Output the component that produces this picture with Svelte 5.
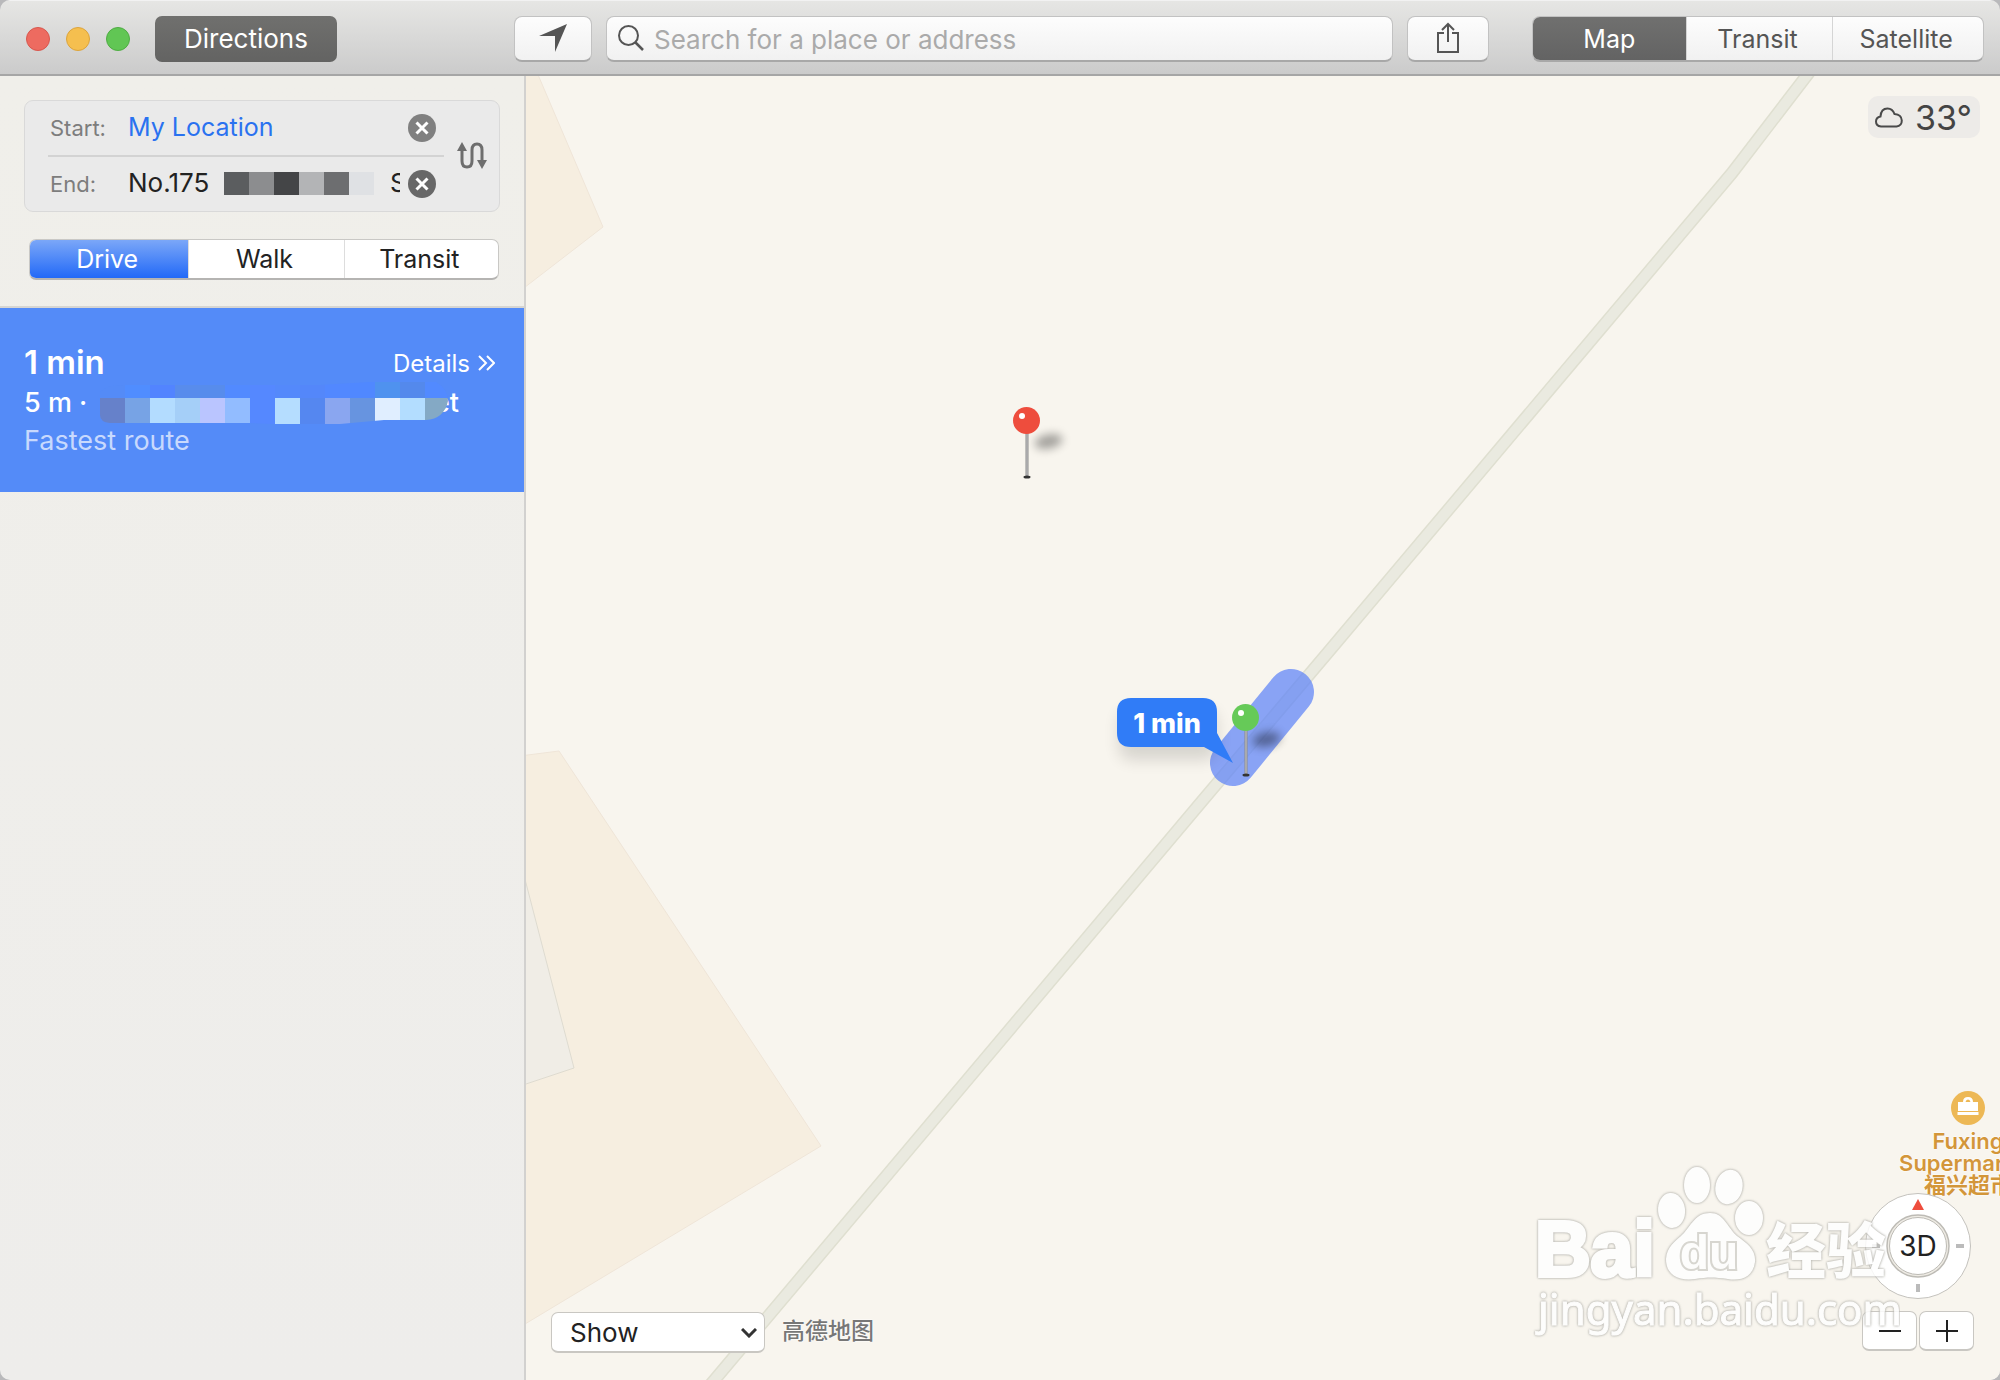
<script>
  let start = $state('My Location');
  let end = $state('No.175');
  let query = $state('');
  let mode = $state('Drive');
  let view = $state('Map');
  const modes = ['Drive', 'Walk', 'Transit'];
  const views = ['Map', 'Transit', 'Satellite'];
  const endBlocks = ['#5b5d5f', '#8c8d8f', '#444547', '#b3b4b6', '#6d6e70', '#dfe1e4'];
  const routeBlocks = ['#6681ca', '#77a3e5', '#b3dcff', '#a5cff8', '#bac5ff', '#92bcff', '#5588ff', '#b5ddff', '#5587f0', '#8aa6f0', '#6794e0', '#e0eeff', '#b3ddff', '#84a9c5'];
  const routeTops = ['#548bf7', '#508dff', '#5284ff', '#588cec', '#578cec', '#528aff', '#5588ff', '#5489fb', '#5487fa', '#5288ff', '#5088ff', '#4f92ef', '#5489ec', '#528aff'];

  function swap() {
    [start, end] = [end, start];
  }
</script>

<div class="window">
  <header class="toolbar">
    <div class="lights">
      <button class="light red" aria-label="Close"></button>
      <button class="light yellow" aria-label="Minimize"></button>
      <button class="light green" aria-label="Zoom"></button>
    </div>
    <button class="directions">Directions</button>
    <button class="tool locate" aria-label="Current location">
      <svg width="28" height="28" viewBox="0 0 28 28"><path d="M28 0 L16 28 L16 12 L0 12 Z" fill="#555" /></svg>
    </button>
    <label class="search">
      <svg width="26" height="26" viewBox="0 0 26 26" fill="none" stroke="#555" stroke-width="2"><circle cx="10.500" cy="10.500" r="9.500" /><path d="M17 17 L25 25" stroke-width="2.500" /></svg>
      <input type="text" bind:value={query} placeholder="Search for a place or address" aria-label="Search for a place or address" />
    </label>
    <button class="tool share" aria-label="Share">
      <svg width="24" height="32" viewBox="0 0 24 32" fill="none" stroke="#555" stroke-width="2"><path d="M8 11 H2 V30 H22 V11 H16 M12 20 V2 M6 8 L12 2 L18 8" /></svg>
    </button>
    <div class="views">
      {#each views as v}
        <button class:on={view === v} aria-pressed={view === v} onclick={() => (view = v)}>{v}</button>
      {/each}
    </div>
  </header>

  <div class="body">
    <aside>
      <form class="trip">
        <div class="fields">
          <div class="field">
            <label for="start">Start:</label>
            <input id="start" class="start" bind:value={start} />
            <button type="button" class="clear" aria-label="Clear start" onclick={() => (start = '')}>
              <svg width="28" height="28" viewBox="0 0 28 28"><circle cx="14" cy="14" r="14" fill="#808080" /><path d="M8.500 8.500 L19.500 19.500 M19.500 8.500 L8.500 19.500" stroke="#fff" stroke-width="3" /></svg>
            </button>
          </div>
          <div class="field">
            <label for="end">End:</label>
            <input id="end" class="end" bind:value={end} />
            <svg class="hidden-text" width="150" height="24" viewBox="0 0 150 24" shape-rendering="crispEdges">
              {#each endBlocks as c, i}
                <rect x={i * 25} y="0" width="25" height="23" fill={c} />
              {/each}
            </svg>
            <span class="cut">S</span>
            <button type="button" class="clear" aria-label="Clear end" onclick={() => (end = '')}>
              <svg width="28" height="28" viewBox="0 0 28 28"><circle cx="14" cy="14" r="14" fill="#686868" /><path d="M8.500 8.500 L19.500 19.500 M19.500 8.500 L8.500 19.500" stroke="#fff" stroke-width="3" /></svg>
            </button>
          </div>
        </div>
        <button type="button" class="swap" aria-label="Swap start and end" onclick={swap}>
          <svg width="30" height="28" viewBox="0 0 30 28"><path d="M5 7 V19 Q5 25 10 25 Q15 25 15 19 V8 Q15 2 20 2 Q25 2 25 8 V20" fill="none" stroke="#6e6e6e" stroke-width="3" /><path d="M0 9 L5 0 L10 9 Z M20 18 L30 18 L25 27 Z" fill="#6e6e6e" /></svg>
        </button>
      </form>

      <div class="modes">
        {#each modes as m}
          <button class:on={mode === m} aria-pressed={mode === m} onclick={() => (mode = m)}>{m}</button>
        {/each}
      </div>

      <section class="route">
        <div class="top">
          <h2>1 min</h2>
          <a href="#details">Details
            <svg width="17" height="16" viewBox="0 0 17 16" fill="none" stroke="#fff" stroke-width="2"><path d="M1 1 L8 8 L1 15 M9 1 L16 8 L9 15" /></svg>
          </a>
        </div>
        <p class="via">
          <span>5 m ·</span>
          <svg width="350" height="46" viewBox="0 -6 350 46">
            <defs><clipPath id="smear"><path d="M0 8 Q4 0 24 0 H220 L270 -3 H336 Q348 4 348 16 Q344 34 326 35 H284 L240 39 H174 L150 38 H10 Q0 37 0 30 Z" /></clipPath></defs>
            <g clip-path="url(#smear)" shape-rendering="crispEdges">
              {#each routeBlocks as c, i}
                <rect x={i * 25} y="-3" width="25" height="16" fill={routeTops[i]} />
                <rect x={i * 25} y="13" width="25" height="27" fill={c} />
              {/each}
            </g>
          </svg>
          <span class="rest">et</span>
        </p>
        <p class="note">Fastest route</p>
      </section>
    </aside>

    <main>
      <svg class="canvas" viewBox="526 76 1474 1304" preserveAspectRatio="xMinYMin slice">
        <defs>
          <filter id="soft" x="-60%" y="-100%" width="220%" height="300%"><feGaussianBlur stdDeviation="5" /></filter>
          <filter id="drop" x="-30%" y="-30%" width="160%" height="190%"><feGaussianBlur stdDeviation="8" /></filter>
          <linearGradient id="stem"><stop offset="0" stop-color="#8b8b8b" /><stop offset="0.500" stop-color="#b9b9bb" /><stop offset="1" stop-color="#8b8b8b" /></linearGradient>
        </defs>
        <rect x="526" y="76" width="1474" height="1304" fill="#f8f5ee" />
        <g fill="#f6eee0" stroke="#efe5d8" stroke-width="1">
          <path d="M520 70 L536 70 L603 227 L520 291 Z" />
          <path d="M520 756 L559 751 L821 1146 L520 1327 Z" />
          <path d="M520 860 L574 1068 L520 1086 Z" fill="#f0ede6" stroke="#dedbd0" />
        </g>
        <g fill="none" stroke-linejoin="round">
          <path d="M1811 70 L1732 173 L1330 650 L1203 800 L706 1390" stroke="#dfdfd0" stroke-width="13" />
          <path d="M1811 70 L1732 173 L1330 650 L1203 800 L706 1390" stroke="#eaeae0" stroke-width="10" />
        </g>
        <path d="M1233 763 L1291 692" stroke="#5a80f8" stroke-opacity="0.700" stroke-width="46" stroke-linecap="round" />

        <rect x="1119" y="710" width="98" height="50" rx="12" fill="#000" opacity="0.130" filter="url(#drop)" />
        <path d="M1131 698 H1203 Q1217 698 1217 712 V733 L1233 763 L1204 747 H1131 Q1117 747 1117 733 V712 Q1117 698 1131 698 Z" fill="#307cf7" />
        <text class="eta" x="1167" y="733" text-anchor="middle">1 min</text>

        <g transform="translate(1245.500 717.500)">
          <ellipse cx="21" cy="22" rx="14" ry="7" transform="rotate(-12 21 22)" opacity="0.400" filter="url(#soft)" />
          <rect x="-1" y="12" width="3" height="45" fill="url(#stem)" />
          <ellipse cx="0.500" cy="57.500" rx="3.500" ry="1.500" fill="#333" />
          <circle r="13.500" fill="#66ca58" /><circle cx="-4.500" cy="-4.500" r="3" fill="#fff" />
        </g>
        <g transform="translate(1026.500 420.500)">
          <ellipse cx="22" cy="21" rx="14" ry="7" transform="rotate(-12 22 21)" opacity="0.350" filter="url(#soft)" />
          <rect x="-1" y="12" width="3" height="45" fill="url(#stem)" />
          <ellipse cx="0.500" cy="56.500" rx="3.500" ry="1.500" fill="#333" />
          <circle r="13.500" fill="#ee4d3d" /><circle cx="-4.500" cy="-4.500" r="3" fill="#fff" />
        </g>
      </svg>

      <div class="weather">
        <svg width="28" height="21" viewBox="0 0 28 21" fill="none" stroke="#4a4a4a" stroke-width="2"><path d="M6 19.500 Q1 19 1 14.500 Q1 10.500 5.500 9.500 Q6 1.500 12.500 1.500 Q17.500 1.500 19.500 7 Q26.500 7.500 26.800 13.500 Q26.800 19 21.500 19.500 Z" /></svg>
        <span>33°</span>
      </div>

      <div class="poi">
        <svg width="34" height="34" viewBox="0 0 34 34"><circle cx="17" cy="17" r="17" fill="#edb855" /><path d="M7 11 H12 Q12 6 17 6 Q22 6 22 11 H27 V20 H7 Z M14.500 11 H19.500 Q19 8.500 17 8.500 Q15 8.500 14.500 11 Z M6.500 21 H27.500 V24 H6.500 Z" fill="#fff" fill-rule="evenodd" /></svg>
        <span>Fuxing</span><span>Supermarket</span><span>福兴超市</span>
      </div>

      <div class="nav">
        <button class="compass" aria-label="3D">
          <svg width="108" height="108" viewBox="0 0 108 108">
            <circle cx="54" cy="54" r="52.500" fill="#fff" stroke="#c4c2bd" />
            <circle cx="54" cy="54" r="31" fill="#eeebe4" stroke="#bdbbb5" stroke-width="1.500" />
            <circle cx="54" cy="54" r="28.500" fill="#fff" stroke="#bdbbb5" />
            <path d="M54 7 L60 18 H48 Z" fill="#ee4d3d" />
            <path d="M92 54 H100 M8 54 H16 M54 92 V100" stroke="#bbb" stroke-width="4" />
            <text x="54" y="64" text-anchor="middle">3D</text>
          </svg>
        </button>
        <div class="zoom">
          <button aria-label="Zoom out"><svg width="22" height="22" viewBox="0 0 22 22"><path d="M0 11 H22" stroke="#222" stroke-width="2" /></svg></button>
          <button aria-label="Zoom in"><svg width="22" height="22" viewBox="0 0 22 22"><path d="M0 11 H22 M11 0 V22" stroke="#222" stroke-width="2" /></svg></button>
        </div>
      </div>

      <div class="bottom">
        <div class="show">
          <select aria-label="Show"><option>Show</option></select>
          <svg width="16" height="10" viewBox="0 0 16 10" fill="none" stroke="#333" stroke-width="3"><path d="M1 1 L8 8 L15 1" /></svg>
        </div>
        <span class="credit">高德地图</span>
      </div>

      <svg class="mark" width="376" height="190" viewBox="1524 1156 376 190">
        <g class="glow" fill="#fff" stroke="#fff">
          <text class="bai" x="1535" y="1276" stroke-width="4">Bai</text>
          <g stroke="none">
            <ellipse cx="1671.500" cy="1210.500" rx="13.500" ry="17.500" transform="rotate(-6 1671 1210)" />
            <ellipse cx="1697" cy="1185" rx="13" ry="18" />
            <ellipse cx="1729" cy="1187" rx="13.500" ry="17.500" transform="rotate(12 1729 1187)" />
            <ellipse cx="1749" cy="1218" rx="14" ry="17" />
            <path d="M1710 1213 C1724 1213 1727 1227 1737 1236 C1748 1244 1756 1250 1755 1262 C1753 1278 1740 1281 1728 1279 C1714 1277 1708 1277 1695 1279 C1680 1281 1666 1276 1666 1259 C1667 1246 1675 1242 1684 1233 C1692 1224 1696 1213 1710 1213 Z" />
          </g>
          <text class="cn" x="1766" y="1273" stroke="none">经验</text>
          <text class="url" x="1538" y="1325" stroke-width="1">jingyan.baidu.com</text>
          <text class="du" x="1709" y="1269" text-anchor="middle" fill="#fff" stroke="#d2d1cb" stroke-width="4" paint-order="stroke">du</text>
        </g>
      </svg>
    </main>
  </div>
</div>

<style>
  :global(body) { margin: 0; background: #b9b9bb; }
  * { box-sizing: border-box; }
  .window { min-height: 100vh; display: flex; flex-direction: column; border-radius: 10px; overflow: hidden; font-family: Inter, "Noto Sans CJK SC", sans-serif; font-size: 26px; color: #222; }
  button, input, select { font: inherit; color: inherit; border: 0; padding: 0; margin: 0; background: none; }
  button { display: flex; align-items: center; justify-content: center; }
  svg { display: block; flex: none; }

  .toolbar { height: 76px; display: flex; align-items: center; padding: 2px 16px 0 26px; background: linear-gradient(#e6e6e4, #cbcbcb); border-top: 1px solid #f2f2f2; border-bottom: 2px solid #a6a6a6; }
  .lights { display: flex; gap: 16px; margin-right: 25px; }
  .light { width: 24px; height: 24px; border-radius: 50%; border: 1px solid; }
  .red { background: #ed6b60; border-color: #d8574d; }
  .yellow { background: #f5bf4f; border-color: #dca43c; }
  .green { background: #61c654; border-color: #4fac43; }
  .directions { width: 182px; height: 46px; border-radius: 7px; background: linear-gradient(#70706e, #636362); color: #fff; }
  .tool, .search, .views { height: 46px; border-radius: 8px; border: 1px solid #c2c2c2; border-bottom: 2px solid #a8a8a8; background: linear-gradient(#fdfdfd, #f1f1f1); }
  .locate { width: 78px; margin-left: 177px; }
  .search { flex: 1; display: flex; align-items: center; gap: 10px; padding: 0 11px; margin: 0 14px; }
  .search input { flex: 1; min-width: 0; outline: 0; height: 43px; padding-top: 2px; }
  .search input::placeholder { color: #aaa; opacity: 1; }
  .share { width: 82px; margin-right: 43px; }
  .views { width: 452px; display: grid; grid-template-columns: 153fr 147fr 151fr; overflow: hidden; color: #555; }
  .views button { padding-top: 2px; font-size: 25px; }
  .views button + button { border-left: 1px solid #d5d5d5; padding-right: 4px; }
  .views .on { background: linear-gradient(#70706f, #636363); color: #fff; }

  .body { flex: 1; display: flex; }
  aside { width: 526px; flex: none; border-right: 2px solid #d2d1cf; background: linear-gradient(#f0efea, #eeedeb); }
  .trip { display: flex; align-items: center; margin: 24px 24px 0; height: 112px; border: 1px solid #d9d9d9; border-radius: 9px; background: #eaeaea; padding-right: 11px; }
  .fields { width: 396px; margin-left: 23px; margin-right: 13px; }
  .field { display: flex; align-items: center; height: 55px; padding: 0 8px 2px 2px; }
  .field:first-child { border-bottom: 2px solid #d3d3d3; height: 57px; padding-bottom: 0; }
  .field label { width: 78px; font-size: 22px; color: #7d7d7d; }
  .field input { outline: 0; min-width: 0; }
  .field .start { flex: 1; color: #2a72f0; font-size: 25px; padding-bottom: 2px; }
  .end { width: 96px; padding-bottom: 2px; }
  .cut { width: 10px; margin: 0 8px 0 16px; padding-bottom: 2px; overflow: hidden; flex: none; }
  .clear { margin-left: auto; }
  .modes { display: grid; grid-template-columns: 159fr 156fr 155fr; margin: 27px 25px 26px 29px; height: 41px; border-radius: 7px; overflow: hidden; border: 1px solid #c9c8c5; border-bottom: 2px solid #b5b4b2; background: #fff; font-size: 25px; }
  .modes button { padding-right: 4px; }
  .modes button + button { border-left: 1px solid #ddd; }
  .modes .on { background: linear-gradient(#7ba7f8, #2269f7); color: #fff; }
  .route { height: 186px; border-top: 2px solid #d6d5d2; background: #548bf8; color: #fff; padding: 33px 29px 0 24px; }
  .top { display: flex; align-items: center; justify-content: space-between; height: 42px; }
  h2 { margin: 0; font-size: 33px; font-weight: 600; }
  .top a { display: flex; align-items: center; gap: 8px; color: #fff; text-decoration: none; font-size: 24px; padding-top: 2px; }
  .via, .note { margin: 0; display: flex; align-items: center; height: 38px; font-size: 27px; white-space: pre; }
  .via span:first-child { width: 76px; font-weight: 500; }
  .via svg { position: relative; z-index: 1; }
  .rest { margin-left: -16px; font-weight: 500; }
  .note { color: #c8d9fd; }

  main { flex: 1; position: relative; overflow: hidden; min-height: 1300px; background: #f8f5ee; }
  .canvas { position: absolute; inset: 0; width: 100%; height: 100%; }
  .eta { font-size: 27px; font-weight: 800; fill: #fff; }
  .weather { position: absolute; top: 20px; right: 20px; height: 42px; width: 112px; display: flex; align-items: center; justify-content: space-between; padding: 0 8px 0 7px; border-radius: 10px; background: #edebe8; color: #444; font-size: 34px; }
  .poi { position: absolute; right: -48px; top: 1015px; width: 160px; display: flex; flex-direction: column; align-items: center; font-size: 22px; font-weight: 600; line-height: 22px; color: #d3963a; text-shadow: 0 0 2px #fff, 0 0 2px #fff; }
  .poi svg { margin-bottom: 5px; }
  .nav { position: absolute; right: 26px; bottom: 29px; display: flex; flex-direction: column; align-items: center; gap: 11px; }
  .compass text { font-size: 28px; fill: #222; }
  .zoom { display: flex; gap: 2px; }
  .zoom button { width: 55px; height: 40px; border-radius: 7px; background: #fff; border: 1px solid #c9c7c2; border-bottom-width: 2px; }
  .bottom { position: absolute; left: 25px; bottom: 27px; display: flex; align-items: center; gap: 17px; }
  .show { display: grid; align-items: center; }
  .show > * { grid-area: 1 / 1; }
  .show svg { justify-self: end; margin-right: 8px; pointer-events: none; }
  select { appearance: none; width: 214px; height: 41px; padding-left: 18px; border: 1px solid #c9c7c2; border-bottom-width: 2px; border-radius: 7px; background: #fff; }
  .credit { font-size: 23px; line-height: 22px; padding-bottom: 4px; font-weight: 500; color: #777; text-shadow: 0 0 2px #fff, 0 0 2px #fff; }
  .mark { position: absolute; right: 100px; bottom: 34px; pointer-events: none; }
  .glow { opacity: 0.85; filter: drop-shadow(0 0 1px #aaa9a3) drop-shadow(0 0 1px #cccbc5); }
  .bai { font: 700 77px "Liberation Sans", sans-serif; }
  .du { font: 700 48px "Liberation Sans", sans-serif; }
  .cn { font: 900 60px "Noto Sans CJK SC", sans-serif; }
  .url { font: 400 42px "Noto Sans", sans-serif; }
</style>
